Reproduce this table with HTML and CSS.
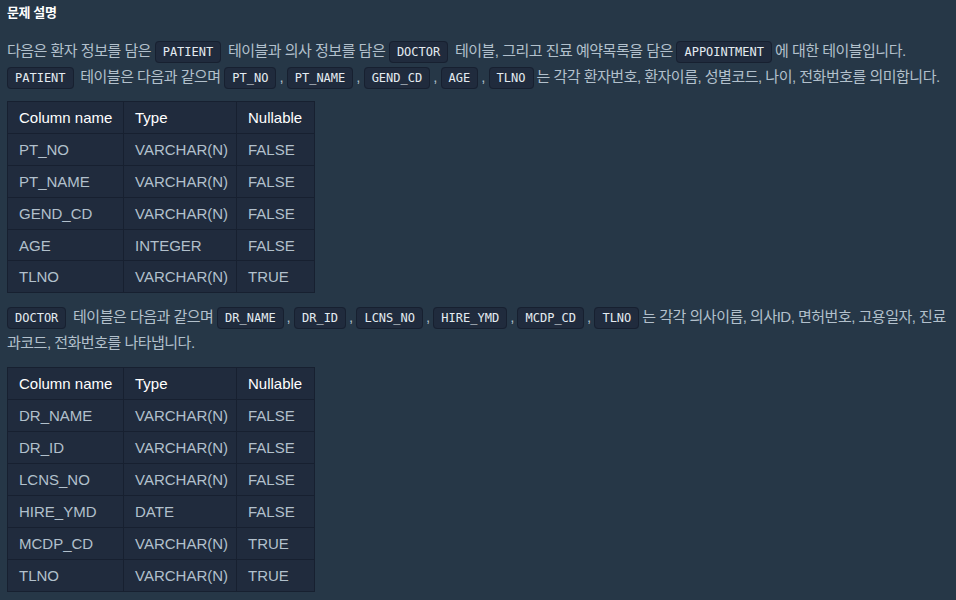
FILE: index.html
```html
<!DOCTYPE html>
<html lang="ko">
<head>
  <meta charset="UTF-8">
  <meta name="viewport" content="width=device-width, initial-scale=1.0">
  <title>문제 설명</title>
  <link rel="stylesheet" href="styles.css">
</head>
<body>
  <div class="guide-section">
    <h5>문제 설명</h5>

    <p>다음은 환자 정보를 담은 <code>PATIENT</code> 테이블과 의사 정보를 담은 <code>DOCTOR</code> 테이블, 그리고 진료 예약목록을 담은 <code>APPOINTMENT</code>에 대한 테이블입니다. <code>PATIENT</code> 테이블은 다음과 같으며 <code>PT_NO</code>, <code>PT_NAME</code>, <code>GEND_CD</code>, <code>AGE</code>, <code>TLNO</code>는 각각 환자번호, 환자이름, 성별코드, 나이, 전화번호를 의미합니다.</p>

    <table>
      <colgroup>
        <col class="col-name">
        <col class="col-type">
        <col class="col-null">
      </colgroup>
      <thead>
        <tr><th>Column name</th><th>Type</th><th>Nullable</th></tr>
      </thead>
      <tbody>
        <tr><td>PT_NO</td><td>VARCHAR(N)</td><td>FALSE</td></tr>
        <tr><td>PT_NAME</td><td>VARCHAR(N)</td><td>FALSE</td></tr>
        <tr><td>GEND_CD</td><td>VARCHAR(N)</td><td>FALSE</td></tr>
        <tr><td>AGE</td><td>INTEGER</td><td>FALSE</td></tr>
        <tr><td>TLNO</td><td>VARCHAR(N)</td><td>TRUE</td></tr>
      </tbody>
    </table>

    <p><code>DOCTOR</code> 테이블은 다음과 같으며 <code>DR_NAME</code>, <code>DR_ID</code>, <code>LCNS_NO</code>, <code>HIRE_YMD</code>, <code>MCDP_CD</code>, <code>TLNO</code>는 각각 의사이름, 의사ID, 면허번호, 고용일자, 진료과코드, 전화번호를 나타냅니다.</p>

    <table>
      <colgroup>
        <col class="col-name">
        <col class="col-type">
        <col class="col-null">
      </colgroup>
      <thead>
        <tr><th>Column name</th><th>Type</th><th>Nullable</th></tr>
      </thead>
      <tbody>
        <tr><td>DR_NAME</td><td>VARCHAR(N)</td><td>FALSE</td></tr>
        <tr><td>DR_ID</td><td>VARCHAR(N)</td><td>FALSE</td></tr>
        <tr><td>LCNS_NO</td><td>VARCHAR(N)</td><td>FALSE</td></tr>
        <tr><td>HIRE_YMD</td><td>DATE</td><td>FALSE</td></tr>
        <tr><td>MCDP_CD</td><td>VARCHAR(N)</td><td>TRUE</td></tr>
        <tr><td>TLNO</td><td>VARCHAR(N)</td><td>TRUE</td></tr>
      </tbody>
    </table>
  </div>
</body>
</html>
```

FILE: styles.css
```css
body {
  margin: 0;
  background: #263747;
  color: #b2c0cc;
  font-family: "Liberation Sans", "Noto Sans CJK KR", sans-serif;
}
.guide-section {
  padding: 0 8px 0 7px;
}
h5 {
  margin: 0;
  font-size: 13px;
  line-height: 26px;
  letter-spacing: -0.4px;
  font-weight: bold;
  color: #fff;
}
p {
  margin: 11px 0 0;
  font-size: 15px;
  line-height: 26px;
  letter-spacing: -0.5px;
}
h5 + p {
  margin-top: 12px;
}
code {
  font-family: "DejaVu Sans Mono", monospace;
  font-size: 12px;
  line-height: 1;
  letter-spacing: 0;
  color: #e4ebf1;
  background: #202b3d;
  border: 1px solid #172030;
  border-radius: 4px;
  padding: 3px 7px;
  margin: 0 3px 0 0;
}
table {
  margin: 11px 0 0;
  border-collapse: collapse;
  table-layout: fixed;
  width: 307px;
  background: #202b3d;
  font-size: 15px;
}
.col-name { width: 116px; }
.col-type { width: 113px; }
.col-null { width: 78px; }
th, td {
  border: 1px solid #172030;
  height: 30.9px;
  padding: 0 12px 0 11px;
  text-align: left;
  white-space: nowrap;
}
th {
  font-weight: normal;
  color: #fff;
}
td {
  color: #b2c0cc;
}
```
